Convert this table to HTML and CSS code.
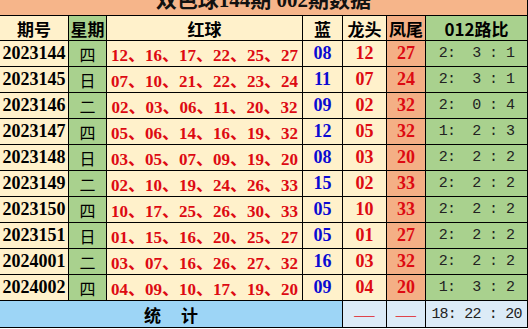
FILE: index.html
```html
<!DOCTYPE html>
<html lang="zh-CN">
<head>
<meta charset="utf-8">
<title>双色球144期 002期数据</title>
<link rel="stylesheet" href="styles.css">
</head>
<body>
<div class="sheet">
  <div class="title"><span>双色球144期 002期数据</span></div>

  <div class="cell cream hd">期号</div>
  <div class="cell green hd">星期</div>
  <div class="cell cream hd">红球</div>
  <div class="cell cream hd">蓝</div>
  <div class="cell cream hd">龙头</div>
  <div class="cell salmon hd">凤尾</div>
  <div class="cell green hd">012路比</div>

  <div class="cell cream issue">2023144</div><div class="cell green wk">四</div><div class="cell cream red reds">12、16、17、22、25、27</div><div class="cell cream blu num">08</div><div class="cell cream red num">12</div><div class="cell salmon red num">27</div><div class="cell green ratio">2:  3 : 1</div>
  <div class="cell cream issue">2023145</div><div class="cell green wk">日</div><div class="cell cream red reds">07、10、21、22、23、24</div><div class="cell cream blu num">11</div><div class="cell cream red num">07</div><div class="cell salmon red num">24</div><div class="cell green ratio">2:  3 : 1</div>
  <div class="cell cream issue">2023146</div><div class="cell green wk">二</div><div class="cell cream red reds">02、03、06、11、20、32</div><div class="cell cream blu num">09</div><div class="cell cream red num">02</div><div class="cell salmon red num">32</div><div class="cell green ratio">2:  0 : 4</div>
  <div class="cell cream issue">2023147</div><div class="cell green wk">四</div><div class="cell cream red reds">05、06、14、16、19、32</div><div class="cell cream blu num">12</div><div class="cell cream red num">05</div><div class="cell salmon red num">32</div><div class="cell green ratio">1:  2 : 3</div>
  <div class="cell cream issue">2023148</div><div class="cell green wk">日</div><div class="cell cream red reds">03、05、07、09、19、20</div><div class="cell cream blu num">08</div><div class="cell cream red num">03</div><div class="cell salmon red num">20</div><div class="cell green ratio">2:  2 : 2</div>
  <div class="cell cream issue">2023149</div><div class="cell green wk">二</div><div class="cell cream red reds">02、10、19、24、26、33</div><div class="cell cream blu num">15</div><div class="cell cream red num">02</div><div class="cell salmon red num">33</div><div class="cell green ratio">2:  2 : 2</div>
  <div class="cell cream issue">2023150</div><div class="cell green wk">四</div><div class="cell cream red reds">10、17、25、26、30、33</div><div class="cell cream blu num">05</div><div class="cell cream red num">10</div><div class="cell salmon red num">33</div><div class="cell green ratio">2:  2 : 2</div>
  <div class="cell cream issue">2023151</div><div class="cell green wk">日</div><div class="cell cream red reds">01、15、16、20、25、27</div><div class="cell cream blu num">05</div><div class="cell cream red num">01</div><div class="cell salmon red num">27</div><div class="cell green ratio">2:  2 : 2</div>
  <div class="cell cream issue">2024001</div><div class="cell green wk">二</div><div class="cell cream red reds">03、07、16、26、27、32</div><div class="cell cream blu num">16</div><div class="cell cream red num">03</div><div class="cell salmon red num">32</div><div class="cell green ratio">2:  2 : 2</div>
  <div class="cell cream issue">2024002</div><div class="cell green wk">四</div><div class="cell cream red reds">04、09、10、17、19、20</div><div class="cell cream blu num">09</div><div class="cell cream red num">04</div><div class="cell salmon red num">20</div><div class="cell green ratio">1:  3 : 2</div>

  <div class="cell sky total"><span>统</span><span>计</span></div>
  <div class="cell pale dash">——</div>
  <div class="cell pale dash">——</div>
  <div class="cell pale ratio sum">18: 22 : 20</div>
</div>
</body>
</html>
```

FILE: styles.css
```css
html, body {
  margin: 0;
  padding: 0;
  background: #ffffff;
}

.sheet {
  display: grid;
  grid-template-columns: 68px 37px 195px 39px 43px 38px 101px;
  grid-template-rows: 15px 24px repeat(10, 25px) 26px;
  gap: 1px;
  padding: 0 1px 1px 0;
  width: 527px;
  background: #000000;
  font-family: "Liberation Serif", "Noto Sans CJK SC", serif;
  color: #000000;
}

.title {
  grid-column: 1 / -1;
  background: #f6b58a;
  overflow: hidden;
  display: flex;
  align-items: flex-end;
  justify-content: center;
}

.title span {
  font-size: 21px;
  line-height: 21px;
  font-weight: 700;
  color: #111111;
  margin-bottom: 4px;
  white-space: pre;
}

.cell {
  display: flex;
  align-items: center;
  justify-content: center;
  white-space: pre;
  overflow: hidden;
}

.cream { background: #fff1cb; }
.green { background: #a9d18e; }
.salmon { background: #f4af85; }
.sky { background: #9dd5f6; }
.pale { background: #dcebf7; }

.hd {
  font-family: "Noto Sans CJK SC", sans-serif;
  font-size: 17px;
  font-weight: 700;
}

.issue {
  font-size: 18px;
  font-weight: 700;
}

.wk {
  font-family: "Noto Sans CJK SC", sans-serif;
  font-size: 16px;
  font-weight: 400;
}

.reds {
  font-size: 17px;
  font-weight: 700;
}

.num {
  font-size: 18px;
  font-weight: 700;
}

.red { color: #dd0a12; }
.blu { color: #0a0ad2; }

.ratio {
  font-family: "Liberation Mono", monospace;
  font-size: 15px;
  letter-spacing: -0.6px;
  color: #222222;
}

.sum {
  font-size: 15px;
  letter-spacing: -0.8px;
}

.total {
  grid-column: 1 / 5;
  gap: 20px;
  font-family: "Noto Sans CJK SC", sans-serif;
  font-size: 17px;
  font-weight: 700;
}

.dash {
  font-family: "Noto Sans CJK SC", sans-serif;
  font-size: 13px;
  color: #e0141c;
}
```
